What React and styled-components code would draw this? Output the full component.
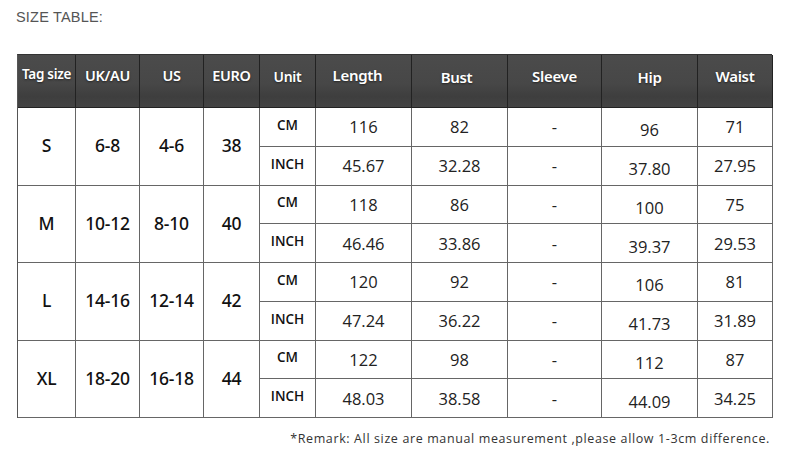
import React from 'react';
import styled, { createGlobalStyle } from 'styled-components';

const GlobalStyle = createGlobalStyle`
    html, body {
        margin: 0;
        padding: 0;
        background: #fff;
    }
    body {
        font-family: "Open Sans", "Noto Sans", "Liberation Sans", sans-serif;
        color: #222;
    }
`;

const Page = styled.div`
    width: 790px;
    height: 471px;
    box-sizing: border-box;
    padding: 8px 18px 0 17px;
`;

const Title = styled.div`
    font-family: "Liberation Sans", Arial, sans-serif;
    font-size: 14.5px;
    line-height: 18px;
    color: #555;
    letter-spacing: 0.2px;
    margin-left: -1px;
`;

const Table = styled.div`
    margin-top: 28px;
    display: grid;
    grid-template-columns: 58px 64px 64px 56px 56px 96px 96px 94px 96px 75px;
    grid-template-rows: 53px repeat(8, 38.75px);
    width: 755px;
    border-left: 1px solid #555;
    border-top: 1px solid #333;
    box-sizing: border-box;
`;

const HeadCell = styled.div`
    display: flex;
    align-items: center;
    justify-content: center;
    padding-bottom: ${p => p.$lift || 10}px;
    padding-right: ${p => p.$left || 0}px;
    box-sizing: border-box;
    background: linear-gradient(180deg, #4b4b4b 0%, #474747 55%, #3e3e3e 80%, #444 100%);
    border-right: 1px solid #222;
    border-bottom: 1px solid #222;
    color: #fff;
    font-family: "Noto Sans", "Open Sans", sans-serif;
    font-weight: 600;
    font-size: ${p => p.$size || 15}px;
    letter-spacing: -0.3px;
    white-space: nowrap;
    text-shadow: 0 1px 2px rgba(0, 0, 0, 0.5);
`;

const Cell = styled.div`
    display: flex;
    align-items: center;
    justify-content: center;
    box-sizing: border-box;
    border-right: 1px solid #666;
    border-bottom: 1px solid #666;
    grid-row: ${p => p.$span ? `span ${p.$span}` : 'auto'};
    padding-top: ${p => p.$shift || 0}px;
    font-size: 16.5px;
    color: #222;
`;

const SizeCell = styled(Cell)`
    font-family: "Noto Sans", "Open Sans", sans-serif;
    font-size: 17.5px;
    font-weight: 500;
    color: #111;
    padding-bottom: 2px;
    letter-spacing: -0.2px;
`;

const UnitCell = styled(Cell)`
    font-size: 13.5px;
    font-weight: 600;
    color: #111;
    padding-bottom: 4px;
`;

const Remark = styled.div`
    margin-top: 12px;
    text-align: right;
    font-size: 12.5px;
    letter-spacing: 0.62px;
    color: #333;
    margin-right: 2px;
`;

const headers = [
    { label: 'Tag size', lift: 14, size: 13.5 },
    { label: 'UK/AU', lift: 12, size: 14.5 },
    { label: 'US', lift: 12, size: 14.5 },
    { label: 'EURO', lift: 12, size: 14.5 },
    { label: 'Unit', lift: 10, size: 14 },
    { label: 'Length', lift: 12, left: 12 },
    { label: 'Bust', lift: 8, left: 6 },
    { label: 'Sleeve', lift: 10 },
    { label: 'Hip', lift: 8 },
    { label: 'Waist', lift: 10 },
];

const sizes = [
    { tag: 'S', uk: '6-8', us: '4-6', euro: '38', cm: ['116', '82', '-', '96', '71'], inch: ['45.67', '32.28', '-', '37.80', '27.95'] },
    { tag: 'M', uk: '10-12', us: '8-10', euro: '40', cm: ['118', '86', '-', '100', '75'], inch: ['46.46', '33.86', '-', '39.37', '29.53'] },
    { tag: 'L', uk: '14-16', us: '12-14', euro: '42', cm: ['120', '92', '-', '106', '81'], inch: ['47.24', '36.22', '-', '41.73', '31.89'] },
    { tag: 'XL', uk: '18-20', us: '16-18', euro: '44', cm: ['122', '98', '-', '112', '87'], inch: ['48.03', '38.58', '-', '44.09', '34.25'] },
];

// 每列数值的细微垂直偏移（还原原图）
const shifts = [0, 0, -4, 6, 0];

const renderValues = (values, key) =>
    values.map((v, i) => (
        <Cell key={`${key}-${i}`} $shift={shifts[i]}>{v}</Cell>
    ));

export default function App() {
    return (
        <Page>
            <GlobalStyle />
            <Title>SIZE TABLE:</Title>
            <Table>
                {headers.map(h => (
                    <HeadCell key={h.label} $lift={h.lift} $size={h.size} $left={h.left}>{h.label}</HeadCell>
                ))}
                {sizes.map(s => (
                    <React.Fragment key={s.tag}>
                        <SizeCell $span={2}>{s.tag}</SizeCell>
                        <SizeCell $span={2}>{s.uk}</SizeCell>
                        <SizeCell $span={2}>{s.us}</SizeCell>
                        <SizeCell $span={2}>{s.euro}</SizeCell>
                        <UnitCell>CM</UnitCell>
                        {renderValues(s.cm, `${s.tag}-cm`)}
                        <UnitCell>INCH</UnitCell>
                        {renderValues(s.inch, `${s.tag}-inch`)}
                    </React.Fragment>
                ))}
            </Table>
            <Remark>*Remark: All size are manual measurement ,please allow 1-3cm difference.</Remark>
        </Page>
    );
}
